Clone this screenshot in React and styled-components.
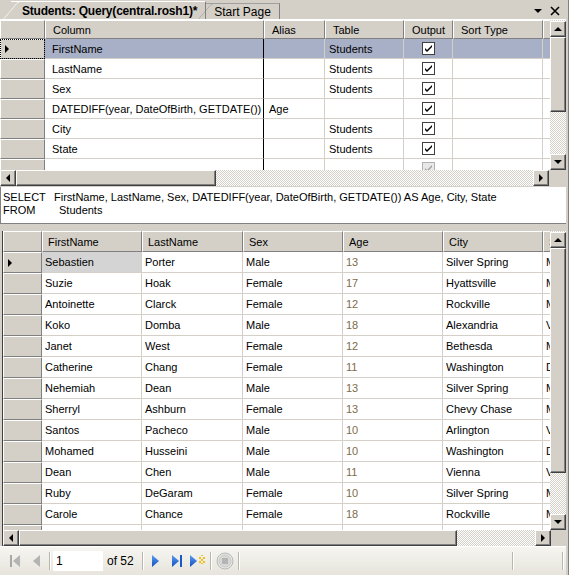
import React from 'react';
import styled, { createGlobalStyle, css } from 'styled-components';

const GlobalStyle = createGlobalStyle`
  * { box-sizing: border-box; }
  body {
    margin: 0;
    background: #d4d0c8;
    font-family: "Liberation Sans", Arial, sans-serif;
    font-size: 11px;
    color: #000;
  }
`;

const raised = css`
  background: #d4d0c8;
  border-top: 1px solid #fff;
  border-left: 1px solid #fff;
  border-right: 1px solid #808080;
  border-bottom: 1px solid #808080;
  box-shadow: 1px 1px 0 #404040;
`;

const checker = css`
  background: repeating-conic-gradient(#ffffff 0 25%, #d4d0c8 0 50%) 0 0 / 2px 2px;
`;

const Window = styled.div`
  width: 569px;
  height: 575px;
  display: flex;
  flex-direction: column;
  border-right: 1px solid #808080;
  padding-right: 2px;
  overflow: hidden;
`;

const TabStrip = styled.div`
  height: 20px;
  flex: none;
  display: flex;
  align-items: flex-end;
  padding-left: 5px;
  border-bottom: 1px solid #fff;
`;

const Tab = styled.div`
  position: relative;
  height: ${(p) => (p.$active ? 18 : 16)}px;
  display: flex;
  align-items: center;
  padding: 0 8px 0 ${(p) => (p.$active ? 11 : 8)}px;
  font-weight: ${(p) => (p.$active ? 'bold' : 'normal')};
  font-size: 12px;
  letter-spacing: ${(p) => (p.$active ? '-0.2px' : '0')};
  border-top: 1px solid ${(p) => (p.$active ? '#fff' : '#a0a0a0')};
  border-right: 1px solid #808080;
  margin-left: ${(p) => (p.$active ? 6 : 0)}px;
  white-space: nowrap;

  &::before {
    content: '';
    position: absolute;
    left: -8px;
    top: -1px;
    bottom: 0;
    width: 14px;
    border-left: 1px solid ${(p) => (p.$active ? '#fff' : '#a0a0a0')};
    border-top: 1px solid ${(p) => (p.$active ? '#fff' : '#a0a0a0')};
    border-top-left-radius: 3px;
    transform: skewX(-40deg);
    transform-origin: bottom left;
    background: #d4d0c8;
    z-index: -1;
  }
`;

const TabControls = styled.div`
  margin-left: auto;
  align-self: center;
  display: flex;
  align-items: center;
  gap: 8px;
  padding-right: 6px;
  padding-top: 2px;
`;

const Pane = styled.div`
  display: flex;
  flex-direction: column;
  flex: none;
`;

const GridArea = styled.div`
  display: flex;
  height: ${(p) => p.$h}px;
  flex: none;
`;

const GridBody = styled.div`
  width: ${(p) => p.$w}px;
  flex: none;
  overflow: hidden;
  background: #d4d0c8;
`;

const Row = styled.div`
  display: flex;
  height: ${(p) => p.$h}px;
  background: ${(p) => (p.$selected ? '#a8b0c8' : '#fff')};
`;

const HeaderRow = styled.div`
  display: flex;
  height: ${(p) => p.$h}px;
  background: #d4d0c8;
`;

const HeaderCell = styled.div`
  ${raised};
  box-shadow: none;
  width: ${(p) => p.$w}px;
  flex: none;
  display: flex;
  align-items: center;
  padding-left: ${(p) => p.$pad}px;
  white-space: nowrap;
  overflow: hidden;
`;

const RowHeader = styled.div`
  ${raised};
  box-shadow: none;
  width: ${(p) => p.$w}px;
  flex: none;
  display: flex;
  align-items: center;
  padding-left: 4px;
  outline: ${(p) => (p.$focus ? '1px dotted #000' : 'none')};
  outline-offset: -1px;
`;

const Cell = styled.div`
  width: ${(p) => p.$w}px;
  flex: none;
  display: flex;
  align-items: center;
  justify-content: ${(p) => (p.$center ? 'center' : 'flex-start')};
  padding-left: ${(p) => (p.$center ? 0 : p.$pad)}px;
  border-right: 1px solid ${(p) => (p.$divider ? '#000' : '#d4d0c8')};
  border-bottom: 1px solid #d4d0c8;
  white-space: nowrap;
  overflow: hidden;
  color: ${(p) => p.$color || '#000'};
  background: ${(p) => p.$bg || 'transparent'};
`;

const VScroll = styled.div`
  width: 16px;
  flex: none;
  display: flex;
  flex-direction: column;
  padding-top: 1px;
  ${checker};
`;

const ScrollBtn = styled.div`
  ${raised};
  box-shadow: inset -1px -1px 0 #808080;
  border-right-color: #404040;
  border-bottom-color: #404040;
  width: 16px;
  height: 16px;
  flex: none;
  display: flex;
  align-items: center;
  justify-content: center;
`;

const Thumb = styled.div`
  ${raised};
  box-shadow: inset -1px -1px 0 #808080;
  border-right-color: #404040;
  border-bottom-color: #404040;
  flex: none;
  ${(p) => (p.$vertical ? `height: ${p.$size}px; width: 16px;` : `width: ${p.$size}px; height: 16px;`)}
`;

const Track = styled.div`
  flex: 1;
`;

const HScroll = styled.div`
  height: 16px;
  flex: none;
  display: flex;
`;

const HTrack = styled.div`
  width: ${(p) => p.$w}px;
  flex: none;
  display: flex;
  ${checker};
`;

const Corner = styled.div`
  flex: 1;
  background: #d4d0c8;
`;

const SqlPane = styled.div`
  height: 36px;
  margin-top: 1px;
  flex: none;
  background: #fff;
  border-left: 1px solid #808080;
  padding: 4px 0 0 2px;
  line-height: 13px;
`;

const SqlLine = styled.div`
  display: flex;
  white-space: nowrap;
`;

const Keyword = styled.span`
  width: ${(p) => p.$w}px;
  flex: none;
`;

const Splitter = styled.div`
  height: 8px;
  flex: none;
  border-top: 1px solid #808080;
  background: #d4d0c8;
`;

const ResultsPane = styled(Pane)`
  border-left: 1px solid #404040;
  margin-left: 2px;
`;

const Toolbar = styled.div`
  height: 29px;
  flex: none;
  display: flex;
  align-items: center;
  padding-left: 5px;
  background: linear-gradient(#f6f5f0, #e6e4dc);
  border-top: 1px solid #fff;
`;

const ToolBtn = styled.div`
  width: ${(p) => p.$w || 24}px;
  height: 20px;
  display: flex;
  align-items: center;
  justify-content: center;
  flex: none;
`;

const Sep = styled.div`
  width: 2px;
  height: 18px;
  border-left: 1px solid #b8b6ae;
  border-right: 1px solid #fff;
  margin: 0 ${(p) => p.$m ?? 2}px;
  flex: none;
`;

const PageInput = styled.div`
  width: 50px;
  height: 20px;
  background: #fff;
  display: flex;
  align-items: center;
  padding-left: 3px;
  font-size: 12px;
  flex: none;
`;

const PageText = styled.span`
  margin: 0 6px 0 4px;
  font-size: 12px;
`;

const Spacer = styled.div`
  flex: 1;
`;

const Tri = ({ dir, color = '#000', size = 4 }) => {
  const s = size;
  const pts = {
    up: `0,${s} ${s},0 ${2 * s},${s}`,
    down: `0,0 ${2 * s},0 ${s},${s}`,
    left: `${s},0 ${s},${2 * s} 0,${s}`,
    right: `0,0 ${s},${s} 0,${2 * s}`,
  }[dir];
  const w = dir === 'up' || dir === 'down' ? 2 * s : s;
  const h = dir === 'up' || dir === 'down' ? s : 2 * s;
  return (
    <svg width={w} height={h} viewBox={`0 0 ${w} ${h}`}>
      <polygon points={pts} fill={color} />
    </svg>
  );
};

const CheckBox = ({ dim }) => (
  <svg width="13" height="13" viewBox="0 0 13 13">
    <rect x="0.5" y="0.5" width="12" height="12" fill={dim ? '#e8e8e8' : '#fff'} stroke={dim ? '#b0b0b0' : '#404040'} />
    <path d="M3 6 L5 8 L10 3 L10 5 L5 10 L3 8 Z" fill={dim ? '#a0a0a0' : '#000'} />
  </svg>
);

const criteriaCols = [
  { key: 'col', label: 'Column', w: 219 },
  { key: 'alias', label: 'Alias', w: 61 },
  { key: 'table', label: 'Table', w: 79 },
  { key: 'out', label: 'Output', w: 49 },
  { key: 'sort', label: 'Sort Type', w: 90 },
  { key: 'order', label: 'Sort Order', w: 80 },
];

const criteriaRows = [
  { col: 'FirstName', alias: '', table: 'Students' },
  { col: 'LastName', alias: '', table: 'Students' },
  { col: 'Sex', alias: '', table: 'Students' },
  { col: 'DATEDIFF(year, DateOfBirth, GETDATE())', alias: 'Age', table: '' },
  { col: 'City', alias: '', table: 'Students' },
  { col: 'State', alias: '', table: 'Students' },
  { col: '', alias: '', table: '', dim: true },
];

const resultCols = [
  { key: 'first', label: 'FirstName', w: 100 },
  { key: 'last', label: 'LastName', w: 101 },
  { key: 'sex', label: 'Sex', w: 100 },
  { key: 'age', label: 'Age', w: 100 },
  { key: 'city', label: 'City', w: 100 },
  { key: 'state', label: 'State', w: 80 },
];

const results = [
  ['Sebastien', 'Porter', 'Male', '13', 'Silver Spring', 'MD'],
  ['Suzie', 'Hoak', 'Female', '17', 'Hyattsville', 'MD'],
  ['Antoinette', 'Clarck', 'Female', '12', 'Rockville', 'MD'],
  ['Koko', 'Domba', 'Male', '18', 'Alexandria', 'VA'],
  ['Janet', 'West', 'Female', '12', 'Bethesda', 'MD'],
  ['Catherine', 'Chang', 'Female', '11', 'Washington', 'DC'],
  ['Nehemiah', 'Dean', 'Male', '13', 'Silver Spring', 'MD'],
  ['Sherryl', 'Ashburn', 'Female', '13', 'Chevy Chase', 'MD'],
  ['Santos', 'Pacheco', 'Male', '10', 'Arlington', 'VA'],
  ['Mohamed', 'Husseini', 'Male', '10', 'Washington', 'DC'],
  ['Dean', 'Chen', 'Male', '11', 'Vienna', 'VA'],
  ['Ruby', 'DeGaram', 'Female', '10', 'Silver Spring', 'MD'],
  ['Carole', 'Chance', 'Female', '18', 'Rockville', 'MD'],
  ['Paul', 'Keys', 'Male', '12', 'Alexandria', 'VA'],
];

const Scrollbar = ({ thumb }) => (
  <VScroll>
    <ScrollBtn><Tri dir="up" /></ScrollBtn>
    <Thumb $vertical $size={thumb} />
    <Track />
    <ScrollBtn><Tri dir="down" /></ScrollBtn>
  </VScroll>
);

const HorizontalBar = ({ thumb, track }) => (
  <HScroll>
    <ScrollBtn><Tri dir="left" /></ScrollBtn>
    <HTrack $w={track}>
      <Thumb $size={thumb} />
    </HTrack>
    <ScrollBtn><Tri dir="right" /></ScrollBtn>
    <Corner />
  </HScroll>
);

const CriteriaPane = () => (
  <Pane>
    <GridArea $h={150}>
      <GridBody $w={550}>
        <HeaderRow $h={19}>
          <RowHeader $w={45} />
          {criteriaCols.map((c) => (
            <HeaderCell key={c.key} $w={c.w} $pad={7}>{c.label}</HeaderCell>
          ))}
        </HeaderRow>
        {criteriaRows.map((r, i) => (
          <Row key={i} $h={20} $selected={i === 0}>
            <RowHeader $w={45} $focus={i === 0}>
              {i === 0 && <Tri dir="right" />}
            </RowHeader>
            <Cell $w={219} $pad={7} $divider>{r.col}</Cell>
            <Cell $w={61} $pad={5}>{r.alias}</Cell>
            <Cell $w={79} $pad={4}>{r.table}</Cell>
            <Cell $w={49} $center><CheckBox dim={r.dim} /></Cell>
            <Cell $w={90} />
            <Cell $w={80} />
          </Row>
        ))}
      </GridBody>
      <Scrollbar thumb={75} />
    </GridArea>
    <HorizontalBar thumb={200} track={517} />
  </Pane>
);

const ResultsGrid = () => (
  <ResultsPane>
    <GridArea $h={299}>
      <GridBody $w={547}>
        <HeaderRow $h={21}>
          <RowHeader $w={39} />
          {resultCols.map((c) => (
            <HeaderCell key={c.key} $w={c.w} $pad={5}>{c.label}</HeaderCell>
          ))}
        </HeaderRow>
        {results.map((r, i) => (
          <Row key={i} $h={21}>
            <RowHeader $w={39}>{i === 0 && <Tri dir="right" />}</RowHeader>
            {resultCols.map((c, j) => (
              <Cell
                key={c.key}
                $w={c.w}
                $pad={3}
                $color={c.key === 'age' ? '#7d6b4d' : undefined}
                $bg={i === 0 && j === 0 ? '#d4d4d4' : undefined}
              >
                {r[j]}
              </Cell>
            ))}
          </Row>
        ))}
      </GridBody>
      <Scrollbar thumb={225} />
    </GridArea>
    <HorizontalBar thumb={438} track={516} />
  </ResultsPane>
);

const FirstIcon = () => (
  <svg width="11" height="14" viewBox="0 0 11 14">
    <rect x="0" y="1" width="2" height="12" fill="#a8a8a8" />
    <polygon points="10,1 10,13 3,7" fill="#b4b4b4" />
  </svg>
);

const PrevIcon = () => (
  <svg width="7" height="14" viewBox="0 0 7 14">
    <polygon points="7,1 7,13 0,7" fill="#b4b4b4" />
  </svg>
);

const blue = 'url(#bluegrad)';

const NextIcon = () => (
  <svg width="7" height="14" viewBox="0 0 7 14">
    <defs>
      <linearGradient id="bluegrad" x1="0" y1="0" x2="0" y2="1">
        <stop offset="0" stopColor="#5c9cf0" />
        <stop offset="1" stopColor="#1450c0" />
      </linearGradient>
    </defs>
    <polygon points="0,1 7,7 0,13" fill={blue} />
  </svg>
);

const LastIcon = () => (
  <svg width="10" height="14" viewBox="0 0 10 14">
    <polygon points="0,1 7,7 0,13" fill={blue} />
    <rect x="8" y="1" width="2" height="12" fill="#1a5ac8" />
  </svg>
);

const NewIcon = () => (
  <svg width="16" height="14" viewBox="0 0 16 14">
    <polygon points="0,1 7,7 0,13" fill={blue} />
    <g fill="#f0c020">
      <rect x="9" y="3" width="2" height="2" />
      <rect x="13" y="3" width="2" height="2" />
      <rect x="11" y="5" width="2" height="2" />
      <rect x="9" y="7" width="2" height="2" />
      <rect x="13" y="7" width="2" height="2" />
      <rect x="11" y="1" width="2" height="1" />
      <rect x="11" y="9" width="2" height="1" />
    </g>
  </svg>
);

const StopIcon = () => (
  <svg width="18" height="18" viewBox="0 0 18 18">
    <circle cx="9" cy="9" r="8" fill="#e8e8e6" stroke="#b8b8b8" />
    <circle cx="9" cy="9" r="6" fill="#d8d8d6" stroke="#c8c8c8" />
    <rect x="6" y="6" width="6" height="6" fill="#b4b4b4" />
  </svg>
);

const NavToolbar = () => (
  <Toolbar>
    <ToolBtn $w={20}><FirstIcon /></ToolBtn>
    <ToolBtn $w={22}><PrevIcon /></ToolBtn>
    <Sep $m={2} />
    <PageInput>1</PageInput>
    <PageText>of 52</PageText>
    <Sep $m={2} />
    <ToolBtn $w={20}><NextIcon /></ToolBtn>
    <ToolBtn $w={22}><LastIcon /></ToolBtn>
    <ToolBtn $w={20}><NewIcon /></ToolBtn>
    <Sep $m={2} />
    <ToolBtn $w={22}><StopIcon /></ToolBtn>
    <Sep $m={2} />
    <Spacer />
    <Sep $m={0} />
    <ToolBtn $w={48} />
    <Sep $m={0} />
    <ToolBtn $w={2} />
  </Toolbar>
);

const App = () => (
  <>
    <GlobalStyle />
    <Window>
      <TabStrip>
        <Tab $active>Students: Query(central.rosh1)*</Tab>
        <Tab>Start Page</Tab>
        <TabControls>
          <Tri dir="down" />
          <svg width="10" height="10" viewBox="0 0 10 10">
            <path d="M1 1 L9 9 M9 1 L1 9" stroke="#000" strokeWidth="1.6" />
          </svg>
        </TabControls>
      </TabStrip>
      <CriteriaPane />
      <SqlPane>
        <SqlLine>
          <Keyword $w={51}>SELECT</Keyword>
          FirstName, LastName, Sex, DATEDIFF(year, DateOfBirth, GETDATE()) AS Age, City, State
        </SqlLine>
        <SqlLine>
          <Keyword $w={56}>FROM</Keyword>
          Students
        </SqlLine>
      </SqlPane>
      <Splitter />
      <ResultsGrid />
      <NavToolbar />
    </Window>
  </>
);

export default App;
